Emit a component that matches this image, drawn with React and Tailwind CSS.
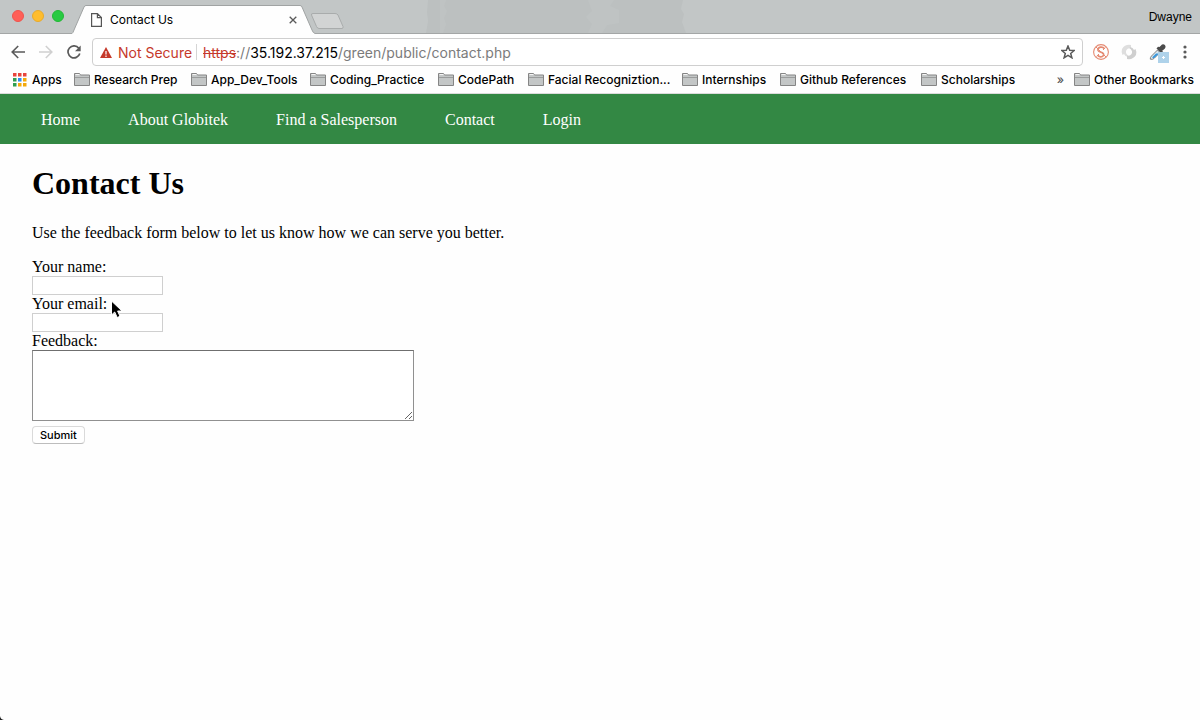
import React from "react";

const folders = [
  { name: "Research Prep", width: "w-[117px]" },
  { name: "App_Dev_Tools", width: "w-[119px]" },
  { name: "Coding_Practice", width: "w-[128px]" },
  { name: "CodePath", width: "w-[90px]" },
  { name: "Facial Recogniztion...", width: "w-[154px]" },
  { name: "Internships", width: "w-[98px]" },
  { name: "Github References", width: "w-[141px]" },
  { name: "Scholarships", width: "w-[112px]" },
];

const pages = ["Home", "About Globitek", "Find a Salesperson", "Contact", "Login"];

const appDots = [
  "#e8453c", "#e8453c", "#e8453c",
  "#2f9e50", "#2a8cf0", "#f4a90a",
  "#2f9e50", "#f4a90a", "#f4a90a",
];

function FolderIcon() {
  return (
    <svg width="16" height="13" viewBox="0 0 16 13" className="shrink-0" aria-hidden="true">
      <path d="M.5 12.5V.5h5l1 1.5h9v10.500z" fill="#c3c6c6" stroke="#858585" />
      <path d="M1 4.500h14" stroke="#9a9c9c" />
      <path d="M1.500 1.500h4" stroke="#f4f4f4" />
    </svg>
  );
}

function TitleBar() {
  return (
    <header className="relative flex h-[34px] items-start border-b border-[#a3a6a6] bg-[#c2c6c6]">
      <svg width="290" height="33" viewBox="0 0 290 33" className="absolute left-[426px] top-0" aria-hidden="true">
        <path d="M2 0h255l-2 9 3 5-2 8 4 11H0l2-12-1-9z" fill="#bcc0c0" />
        <path d="M14 0h6l-2 6 3 5-3 7 2 6-3 9h-3zM162 0h26l-4 6 9 4v13l-12 2-5 8h-14l4-9-6-7 6-6z" fill="#bfc3c3" />
      </svg>
      <div className="flex w-[72px] shrink-0 gap-2 pl-3 pt-[10px]">
        <button aria-label="Close window" className="size-3 rounded-full border border-[#ee544d] bg-[#ff5f57]" />
        <button aria-label="Minimize window" className="size-3 rounded-full border border-[#e8aa2c] bg-[#ffbd2e]" />
        <button aria-label="Zoom window" className="size-3 rounded-full border border-[#22b835] bg-[#28ca42]" />
      </div>
      <div className="relative h-[34px] w-[243px] shrink-0">
        <svg width="243" height="34" viewBox="0 0 243 34" className="absolute inset-0" aria-hidden="true">
          <path d="M0 34V33.5Q1 33 2 30L12 7Q12.800 5.500 14 5.500H228Q229.500 5.500 230 7L240 30Q241 33 243 33.500V34z" fill="#fefefe" />
          <path d="M0 33.500Q1 33 2 30L12 7Q12.800 5.500 14 5.500H228Q229.500 5.500 230 7L240 30Q241 33 243 33.500" fill="none" stroke="#a0a3a3" />
        </svg>
        <div className="relative flex h-[34px] items-center pl-[19px] pr-[18px] pt-[6px]">
          <svg width="11" height="14" viewBox="0 0 11 14" aria-hidden="true">
            <path d="M.6.6h5.800l4 4v8.800H.6zM6.400.6v4h4" fill="#fff" stroke="#555" strokeWidth="1.200" />
          </svg>
          <span className="ml-2 flex-1 text-[12px]">Contact Us</span>
          <button aria-label="Close tab">
            <svg width="8" height="8" viewBox="0 0 8 8"><path d="M.7.7l6.600 6.600M7.300.7L.7 7.300" stroke="#5a5a5a" strokeWidth="1.300" /></svg>
          </button>
        </div>
      </div>
      <button aria-label="New tab" className="relative -ml-[5px] mt-[12px]">
        <svg width="34" height="18" viewBox="0 0 34 18">
          <path d="M3 1.500H25Q27 1.500 28 3L33 14.500Q33.500 16.500 32 16.500H9Q7.500 16.500 6.500 14.500L1.500 3Q1 1.500 3 1.500z" fill="#d2d4d4" stroke="#a9acac" />
        </svg>
      </button>
      <button className="relative ml-auto pr-2 pt-[8px] font-['Liberation_Sans',sans-serif] text-[12px] leading-[18px]">Dwayne</button>
    </header>
  );
}

function Toolbar() {
  return (
    <div className="flex h-8 items-end bg-[#fefefe] pl-[11px] pr-[13px]">
      <div className="flex h-7 w-[81px] shrink-0 items-center gap-[14px]">
        <button aria-label="Back">
          <svg width="14" height="14" viewBox="0 0 14 14" fill="none" stroke="#5a5a5a" strokeWidth="1.600"><path d="M14 7H1.500M7.200 1L1.200 7l6 6" /></svg>
        </button>
        <button aria-label="Forward">
          <svg width="14" height="14" viewBox="0 0 14 14" fill="none" stroke="#d0d0d0" strokeWidth="1.600"><path d="M0 7h12.500M6.800 1l6 6-6 6" /></svg>
        </button>
        <button aria-label="Reload">
          <svg width="14" height="14" viewBox="0 0 14 14"><path d="M11.800 3.200A6 6 0 1 0 12.800 8.500" fill="none" stroke="#5a5a5a" strokeWidth="1.700" /><path d="M13.700.5v5.700H8z" fill="#5a5a5a" /></svg>
        </button>
      </div>
      <div className="flex h-7 flex-1 items-center rounded-[4px] border border-[#cfcfcf] bg-white pl-[7px] pr-[7px] text-[14px]">
        <svg width="12" height="11" viewBox="0 0 12 11" aria-hidden="true">
          <path d="M6 0l6 11H0z" fill="#c5392b" /><path d="M6 4v3.500M6 8.500V10" stroke="#fff" strokeWidth="1.200" />
        </svg>
        <span className="ml-[6px] w-[78px] whitespace-nowrap text-[#c5392b]">Not Secure</span>
        <span className="mr-[6px] h-4 w-px bg-[#d5d5d5]" />
        <span className="flex-1 whitespace-nowrap text-[#7b7b7b]">
          <span className="text-[#c5392b] line-through">https</span>://<span className="text-black">35.192.37.215</span>/green/public/contact.php
        </span>
        <button aria-label="Bookmark this page">
          <svg width="14" height="14" viewBox="0 0 14 14"><path d="M7 1l1.700 4.200 4.500.3-3.500 2.900 1.200 4.400L7 10.400l-3.900 2.400 1.200-4.400L.8 5.500l4.500-.3z" fill="none" stroke="#5a5a5a" strokeWidth="1.500" /></svg>
        </button>
      </div>
      <div className="flex h-7 items-center pl-[10px]">
        <button aria-label="Script blocker" className="w-7">
          <svg width="16" height="16" viewBox="0 0 16 16" fill="none" stroke="#e58a72">
            <circle cx="8" cy="8" r="7.400" strokeWidth="1.100" />
            <path d="M11.500 4.800Q10 2.800 7.500 3.200 4.600 3.800 5 6.200 5.400 7.600 8 8.200 11 9 10.600 11 10 13 7.500 12.800 5.500 12.600 4.500 11" strokeWidth="1.700" />
            <path d="M3 3l10 10M12.500 3.500L10 6M3.500 12.500L6 10" strokeWidth="1" />
          </svg>
        </button>
        <button aria-label="Sync" className="w-7">
          <svg width="16" height="16" viewBox="0 0 16 16">
            <path d="M10 1Q4 0 1 5 0 8 1.500 11L3 10Q4 12.500 7 13L7.500 11.500Q4.500 10 5 7 6 4 10 4z" fill="#dedede" />
            <path d="M6 15Q12 16 15 11 16 8 14.500 5L13 6Q12 3.500 9 3L8.500 4.500Q11.500 6 11 9 10 12 6 12z" fill="#cfcfcf" />
          </svg>
        </button>
        <button aria-label="Color picker" className="w-[34px]">
          <svg width="20" height="21" viewBox="0 0 20 21">
            <path d="M1.300 17.200Q1 15.500 2.500 14L8.500 8l2.500 2.500-6 6Q3.500 17.800 1.300 17.200z" fill="#d9e6ee" stroke="#808080" />
            <path d="M3 15.500l4-4h3l-5 4.800z" fill="#3a97dc" />
            <path d="M7.500 6.500l5 5 1.500-1.500-.8-1.300Q17 6.500 16.500 4 15.500 1.500 13 2.500L10.500 5 9 4.800z" fill="#4b4b4b" />
            <path d="M9 10h11v11H9z" fill="#aed2ea" />
            <path d="M14.500 14v3M13 15.500h3" stroke="#fff" />
          </svg>
        </button>
        <button aria-label="Browser menu">
          <svg width="4" height="14" viewBox="0 0 4 14" fill="#5a5a5a"><circle cx="2" cy="2" r="1.600" /><circle cx="2" cy="7" r="1.600" /><circle cx="2" cy="12" r="1.600" /></svg>
        </button>
      </div>
    </div>
  );
}

function BookmarksBar() {
  return (
    <div className="flex h-7 items-center whitespace-nowrap border-b border-[#dcdcdc] bg-[#fefefe] pl-[13px] pr-[6px] text-[12px] font-medium">
      <a href="#apps" className="flex w-[61px] shrink-0 items-center gap-[5px]">
        <svg width="14" height="14" viewBox="0 0 14 14" aria-hidden="true">
          {appDots.map((fill, i) => (
            <rect key={i} x={(i % 3) * 5} y={Math.floor(i / 3) * 5} width="3.500" height="3.500" fill={fill} />
          ))}
        </svg>
        Apps
      </a>
      {folders.map((f) => (
        <a key={f.name} href="#bookmark" className={`flex shrink-0 items-center gap-1 ${f.width}`}>
          <FolderIcon />
          {f.name}
        </a>
      ))}
      <button aria-label="More bookmarks" className="ml-auto mr-[10px] text-[#555]">»</button>
      <a href="#other" className="flex items-center gap-1">
        <FolderIcon />
        Other Bookmarks
      </a>
    </div>
  );
}

export default function App() {
  return (
    <div className="relative min-h-screen overflow-hidden bg-[#fefefe] font-['Inter',sans-serif] text-black">
      <TitleBar />
      <Toolbar />
      <BookmarksBar />
      <div className="font-['Liberation_Serif',serif] text-[16px] leading-[18px]">
        <nav className="flex h-[50px] items-center gap-12 bg-[#338844] pl-[41px] pt-[2px] text-white">
          {pages.map((p) => (
            <a key={p} href="#page">{p}</a>
          ))}
        </nav>
        <main className="px-8 pt-[21px]">
          <h1 className="text-[32px] font-bold leading-[36px]">Contact Us</h1>
          <p className="mt-[23px]">Use the feedback form below to let us know how we can serve you better.</p>
          <form className="mt-4 flex flex-col items-start" onSubmit={(e) => e.preventDefault()}>
            <label htmlFor="name">Your name:</label>
            <input id="name" type="text" className="h-[19px] w-[131px] border border-[#cfcfcf] bg-white px-1 text-[11px]" />
            <label htmlFor="email">Your email:</label>
            <input id="email" type="text" className="h-[19px] w-[131px] border border-[#cfcfcf] bg-white px-1 text-[11px]" />
            <label htmlFor="feedback">Feedback:</label>
            <textarea id="feedback" className="h-[71px] w-[382px] border border-[#909090] border-t-[#6f6f6f] bg-white p-1 text-[11px]" />
            <button type="submit" className="mt-[5px] h-[18px] rounded-[4px] border border-[#dadada] border-b-[#bdbdbd] bg-white px-[7px] font-['Inter',sans-serif] text-[11px] font-medium leading-[16px]">
              Submit
            </button>
          </form>
        </main>
      </div>
      <svg width="14" height="20" viewBox="0 0 14 20" className="absolute left-[110px] top-[300px]" aria-hidden="true">
        <path d="M1.500 1v14l3.200-3 2.500 5.500 2.800-1.200L7.600 11H12z" fill="#000" stroke="#fff" />
      </svg>
      <svg width="4" height="4" viewBox="0 0 4 4" className="absolute bottom-0 left-0" aria-hidden="true">
        <path d="M0 0Q.5 3.500 4 4H0z" fill="#222" />
      </svg>
    </div>
  );
}
